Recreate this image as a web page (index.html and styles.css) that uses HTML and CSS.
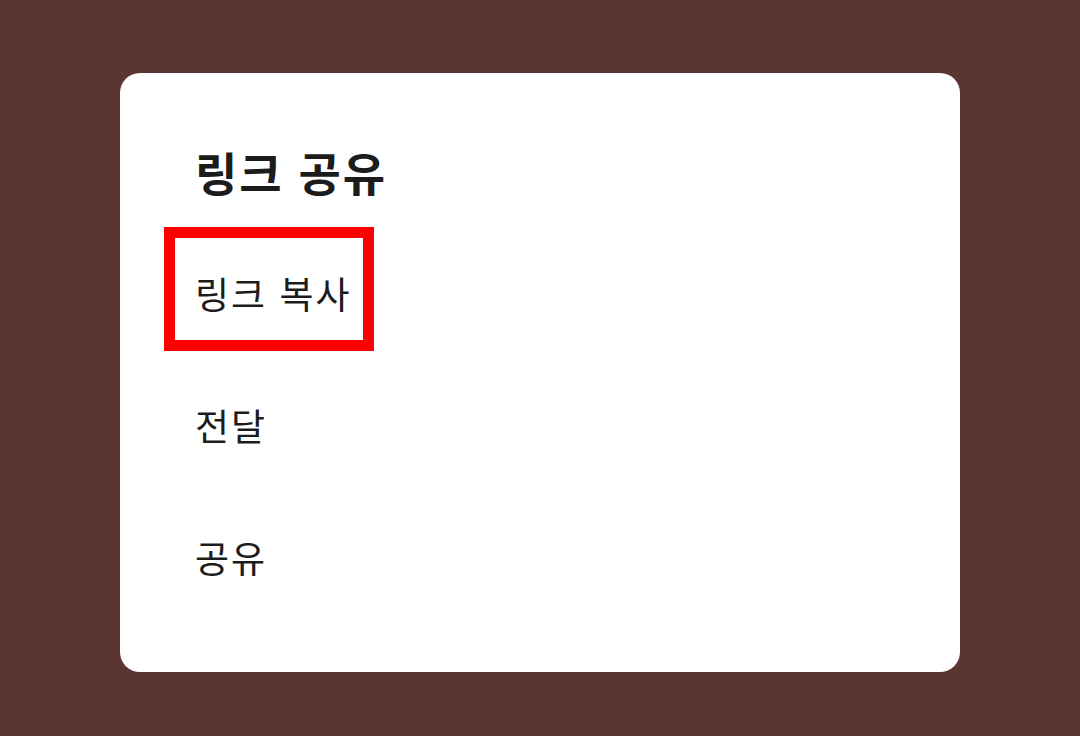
FILE: index.html
```html
<!DOCTYPE html>
<html lang="ko">
<head>
<meta charset="utf-8">
<link rel="stylesheet" href="styles.css">
</head>
<body>
<div class="dialog">
  <h1 class="title">링크 공유</h1>
  <ul class="items">
    <li class="item highlighted"><span class="label">링크 복사</span><span class="mark"></span></li>
    <li class="item"><span class="label">전달</span></li>
    <li class="item"><span class="label">공유</span></li>
  </ul>
</div>
</body>
</html>
```
FILE: styles.css
```css
html, body {
  margin: 0;
  padding: 0;
}
body {
  width: 1080px;
  height: 736px;
  background: #5a3531;
  font-family: "Noto Sans CJK KR", "Noto Sans", sans-serif;
  color: #1c1c1c;
  display: flex;
  justify-content: center;
  padding-top: 73px;
  box-sizing: border-box;
}
.dialog {
  width: 840px;
  height: 599px;
  background: #ffffff;
  border-radius: 20px;
  box-sizing: border-box;
  padding: 75px 0 0 75px;
}
.title {
  margin: 0 0 33px;
  font-size: 46px;
  font-weight: 700;
  line-height: 1;
  letter-spacing: 2px;
}
.items {
  list-style: none;
  margin: 0;
  padding: 0;
}
.item {
  position: relative;
  font-size: 37px;
  line-height: 132px;
  letter-spacing: 2px;
}
.mark {
  position: absolute;
  left: -31px;
  top: 0;
  width: 210px;
  height: 124px;
  border: 11px solid #ff0000;
  box-sizing: border-box;
}
```
